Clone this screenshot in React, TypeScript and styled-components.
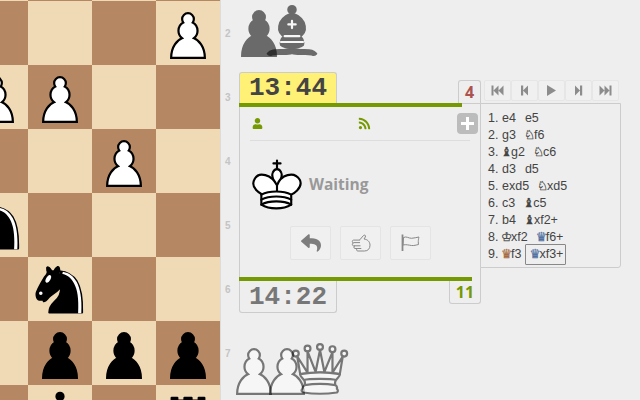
import React from "react";
import styled, { createGlobalStyle } from "styled-components";
import { FaUser, FaRss, FaReply } from "react-icons/fa";

const Global = createGlobalStyle`
  html, body { margin: 0; padding: 0; background: #eeeeee; }
  * { box-sizing: border-box; }
`;

const Page = styled.div`
  width: 640px; height: 400px; overflow: hidden; display: flex; background: #eeeeee;
  font-family: "Liberation Sans", Arial, sans-serif;
`;

const Board = styled.div`
  flex: none; display: grid; width: 220px; height: 400px;
  grid-template-columns: 28px repeat(3, 64px);
  grid-template-rows: 1px repeat(6, 64px) 15px;
`;

const Square = styled.div<{ $dark: boolean; $edge?: boolean }>`
  background: ${(p) => (p.$dark ? "#b58863" : "#f0d9b5")};
  overflow: hidden; display: flex; align-items: flex-start;
  justify-content: ${(p) => (p.$edge ? "flex-end" : "flex-start")};
`;

const PieceSvg = styled.svg<{ $size: number }>`
  flex: none; display: block; width: ${(p) => p.$size}px; height: ${(p) => p.$size}px;
`;

const BoardPawn = styled.div`
  flex: none; margin: -1px -1px 0 -1.5px;
`;

const Ranks = styled.div`
  flex: none; width: 19px; padding-top: 1px; display: flex; flex-direction: column;
  border-left: 1px solid #dcdcdc;
`;

const Rank = styled.div`
  height: 64px; flex: none; display: flex; align-items: center; padding-left: 4px;
  font-size: 10px; font-weight: bold; color: #c4c4c4;
`;

const Side = styled.div`
  flex: none; width: 382px; display: flex; flex-direction: column;
`;

const Captures = styled.div<{ $height: number; $top?: number }>`
  flex: none; display: flex; height: ${(p) => p.$height}px; align-items: flex-start;
  margin-top: ${(p) => p.$top ?? 0}px;
`;

const Capture = styled.div<{ $left: number; $dim?: boolean }>`
  flex: none; margin-left: ${(p) => p.$left}px;
  opacity: ${(p) => (p.$dim ? 0.5 : 0.55)};
`;

const Table = styled.div`flex: none; display: flex; align-items: flex-start;`;

const PlayColumn = styled.div`flex: none; width: 242px; display: flex; flex-direction: column;`;

const ClockRow = styled.div<{ $top?: boolean }>`
  flex: none; display: flex; justify-content: space-between;
  align-items: ${(p) => (p.$top ? "flex-end" : "flex-start")};
  ${(p) => (p.$top ? "height: 31px;" : "")}
`;

const Clock = styled.div<{ $running?: boolean }>`
  width: 98px; height: ${(p) => (p.$running ? 31 : 32)}px;
  display: flex; align-items: center; justify-content: center;
  font-family: "Liberation Mono", monospace; font-weight: bold; font-size: 26px;
  color: ${(p) => (p.$running ? "#444444" : "#777777")};
  background: ${(p) => (p.$running ? "#fff176" : "#eeeeee")};
  border: 1px solid #cccccc;
  border-width: ${(p) => (p.$running ? "1px 1px 0 1px" : "0 1px 1px 1px")};
  border-radius: ${(p) => (p.$running ? "3px 3px 0 0" : "0 0 3px 3px")};
`;

const Score = styled.div<{ $width: number; $height: number; $up?: boolean; $good?: boolean }>`
  width: ${(p) => p.$width}px; height: ${(p) => p.$height}px;
  display: flex; align-items: center; justify-content: center;
  font-size: 16px; font-weight: bold; font-family: "Open Sans", sans-serif;
  color: ${(p) => (p.$good ? "#759900" : "#ac524f")};
  border: 1px solid #cccccc;
  border-width: ${(p) => (p.$up ? "1px 1px 0 1px" : "0 1px 1px 1px")};
  border-radius: ${(p) => (p.$up ? "3px 3px 0 0" : "0 0 3px 3px")};
`;

const BarTrack = styled.div`
  flex: none; height: 4px; border-right: 1px solid #cccccc;
`;

const Bar = styled.div`
  height: 4px; background: #759900;
`;

const TopLine = styled.div`flex: none; height: 0; border-top: 1px solid #cccccc; margin-bottom: -1px;`;

const Panel = styled.div`
  flex: none; height: 170px; border: 1px solid #cccccc; border-width: 0 1px;
  display: flex; flex-direction: column; padding: 0 10px;
`;

const IconRow = styled.div`
  flex: none; height: 34px; display: flex; align-items: center; color: #759900; font-size: 13px;
  border-bottom: 1px solid #dddddd; position: relative;
`;

const PersonSlot = styled.div`width: 108px; padding-left: 2px; display: flex;`;
const RssSlot = styled.div`flex: 1; display: flex;`;

const PlusButton = styled.div`
  position: absolute; right: -8px; top: 6px; width: 21px; height: 21px; border-radius: 4px;
  background: #bcbcbc; display: flex; align-items: center; justify-content: center;
`;

const KingRow = styled.div`
  flex: none; display: flex; align-items: center; margin-top: 17px; margin-left: -5px; height: 52px;
`;

const Waiting = styled.div`
  font-family: "Open Sans", sans-serif; font-weight: bold; font-size: 15.5px; color: #999999;
  margin-bottom: 1px;
`;

const Actions = styled.div`
  flex: none; display: flex; justify-content: center; gap: 9px; margin-top: 16px; padding-left: 1px;
`;

const ActionButton = styled.div`
  width: 41px; height: 34px; display: flex; align-items: center; justify-content: center;
  background: #f0f0f0; border: 1px solid #e4e4e4; border-radius: 2px; color: #7d7d7d;
`;

const MovesColumn = styled.div`flex: none; width: 140px; display: flex; flex-direction: column; margin-left: -1px;`;

const Nav = styled.div`
  flex: none; height: 31px; padding: 8px 0 2px 4px; display: flex;
`;

const NavButton = styled.div`
  width: 27px; height: 21px; display: flex; align-items: center; justify-content: center;
  background: #f0f0f0; border: 1px solid #e6e6e6; border-radius: 2px;
`;

const MovesPanel = styled.div`
  flex: none; height: 165px; width: 141px; border: 1px solid #cccccc; border-radius: 0 0 3px 0;
  padding: 6px 0 0 7px; background: #eeeeee;
  font-size: 12.5px; color: #444444; line-height: 17px;
`;

const MoveRow = styled.div`flex: none; height: 17px; white-space: nowrap; display: flex; align-items: flex-start;`;
const MoveNum = styled.span`width: 14px; flex: none;`;
const Move = styled.span<{ $current?: boolean }>`
  margin-right: ${(p) => (p.$current ? 0 : 9)}px;
  ${(p) => (p.$current ? "margin-left: -5px; margin-top: -2px; border: 1px solid #888888; padding: 0 2px 0 4px; height: 21px; line-height: 19px; border-radius: 1px;" : "")}
`;
const Glyph = styled.span<{ $tint?: string }>`
  display: inline-block; width: 9px; line-height: 14px; font-family: "DejaVu Sans", sans-serif; font-size: 12.5px;
  margin-left: -1px; margin-right: 1px;
  color: ${(p) => p.$tint ?? "#444444"};
  -webkit-text-stroke: 0.25px ${(p) => p.$tint ?? "#444444"};
`;

const PawnPath = "M22.5 9c-2.21 0-4 1.79-4 4 0 .89.29 1.71.78 2.38C17.33 16.5 16 18.59 16 21c0 2.03.94 3.84 2.41 5.03-3 1.06-7.41 5.55-7.41 13.47h23c0-7.92-4.41-12.41-7.41-13.47 1.47-1.19 2.41-3 2.41-5.03 0-2.41-1.33-4.5-3.28-5.62.49-.67.78-1.49.78-2.38 0-2.21-1.79-4-4-4z";

const Pawn = ({ black, size = 66 }: { black?: boolean; size?: number }) => (
  <PieceSvg $size={size} viewBox="0 0 45 45">
    <path d={PawnPath} fill={black ? "#000" : "#fff"} stroke="#000" strokeWidth="1.5" strokeLinecap="round" />
  </PieceSvg>
);

const SquarePawn = ({ black }: { black?: boolean }) => (
  <BoardPawn><Pawn black={black} /></BoardPawn>
);

const Knight = () => (
  <PieceSvg $size={64} viewBox="0 0 45 45">
    <g fill="#000" stroke="#000" strokeWidth="1.5" strokeLinecap="round" strokeLinejoin="round">
      <path d="M22 10c10.5 1 16.5 8 16 29H15c0-9 10-6.5 8-21" />
      <path d="M24 18c.38 2.91-5.55 7.37-8 9-3 2-2.82 4.34-5 4-1.042-.94 1.41-3.04 0-3-1 0 .19 1.23-1 2-1 0-4.003 1-4-4 0-2 6-12 6-12s1.89-1.9 2-3.5c-.73-.994-.5-2-.5-3 1-1 3 2.5 3 2.5h2s.78-1.992 2.5-3c1 0 1 3 1 3" />
      <path fill="#fff" stroke="#fff" d="M9.5 25.5a.5.5 0 1 1-1 0 .5.5 0 1 1 1 0zm5.433-9.75a.5 1.5 30 1 1-1.299-.75.5 1.5 30 1 1 1.299.75z" />
      <path fill="#fff" stroke="none" d="M24.55 10.4l-.45 1.45.5.15c3.15 1 5.65 2.49 7.9 6.75S35.75 29.06 35.25 39l-.05.5h2.25l.05-.5c.5-10.06-.88-16.85-3.25-21.34-2.37-4.49-5.79-6.64-9.19-7.16l-.51-.1z" />
    </g>
  </PieceSvg>
);

const BlackBishop = ({ size = 64 }: { size?: number }) => (
  <PieceSvg $size={size} viewBox="0 0 45 45">
    <g fill="#000" stroke="#000" strokeWidth="1.5" strokeLinecap="round" strokeLinejoin="round">
      <path strokeLinecap="butt" d="M9 36c3.39-.97 10.11.43 13.5-2 3.39 2.43 10.11 1.03 13.5 2 0 0 1.65.54 3 2-.68.97-1.65.99-3 .5-3.39-.97-10.11.46-13.5-1-3.39 1.46-10.11.03-13.5 1-1.354.49-2.323.47-3-.5 1.354-1.94 3-2 3-2z" />
      <path strokeLinecap="butt" d="M15 32c2.5 2.5 12.5 2.5 15 0 .5-1.5 0-2 0-2 0-2.5-2.5-4-2.5-4 5.5-1.5 6-11.5-5-15.5-11 4-10.5 14-5 15.5 0 0-2.5 1.5-2.5 4 0 0-.5.5 0 2z" />
      <path d="M25 8a2.5 2.5 0 1 1-5 0 2.5 2.5 0 1 1 5 0z" />
      <path d="M17.5 26h10M15 30h15m-7.5-14.5v5M20 18h5" stroke="#fff" strokeLinejoin="miter" fill="none" />
    </g>
  </PieceSvg>
);

const BlackRook = () => (
  <PieceSvg $size={64} viewBox="0 0 45 45">
    <g fill="#000" stroke="#000" strokeWidth="1.5" strokeLinejoin="round">
      <path d="M14 16.5L11 14h23l-3 2.5H14zM11 14V9h4v2h5V9h5v2h5V9h4v5H11z" />
      <path d="M14 29.5v-13h17v13H14z" />
    </g>
  </PieceSvg>
);

const WhiteQueen = ({ size = 64 }: { size?: number }) => (
  <PieceSvg $size={size} viewBox="0 0 45 45">
    <g fill="#fff" fillRule="evenodd" stroke="#000" strokeWidth="1.5" strokeLinejoin="round">
      <path d="M8 12a2 2 0 1 1-4 0 2 2 0 1 1 4 0zM24.5 7.5a2 2 0 1 1-4 0 2 2 0 1 1 4 0zM41 12a2 2 0 1 1-4 0 2 2 0 1 1 4 0zM16 8.5a2 2 0 1 1-4 0 2 2 0 1 1 4 0zM33 9a2 2 0 1 1-4 0 2 2 0 1 1 4 0z" />
      <path d="M9 26c8.5-1.5 21-1.5 27 0l2-12-7 11V11l-5.5 13.5-3-15-3 15-5.5-14V25L7 14l2 12z" strokeLinecap="butt" />
      <path d="M9 26c0 2 1.5 2 2.5 4 1 1.5 1 1 .5 3.5-1.5 1-1.5 2.5-1.5 2.5-1.5 1.5.5 2.5.5 2.5 6.5 1 16.5 1 23 0 0 0 1.5-1 0-2.5 0 0 .5-1.5-1-2.5-.5-2.5-.5-2 .5-3.5 1-2 2.5-2 2.5-4-8.5-1.5-18.5-1.5-27 0z" strokeLinecap="butt" />
      <path d="M11.5 30c3.5-1 18.5-1 22 0M12 33.5c6-1 15-1 21 0" fill="none" />
    </g>
  </PieceSvg>
);

const WhiteKing = () => (
  <PieceSvg $size={64} viewBox="0 0 45 45">
    <g fill="none" fillRule="evenodd" stroke="#000" strokeWidth="1.5" strokeLinecap="round" strokeLinejoin="round">
      <path d="M22.5 11.63V6M20 8h5" strokeLinejoin="miter" />
      <path d="M22.5 25s4.5-7.5 3-10.5c0 0-1-2.5-3-2.5s-3 2.5-3 2.5c-1.5 3 3 10.5 3 10.5" fill="#fff" strokeLinecap="butt" strokeLinejoin="miter" />
      <path d="M11.5 37c5.5 3.5 15.5 3.5 21 0v-7s9-4.5 6-10.5c-4-6.5-13.5-3.5-16 4V27v-3.5c-3.5-7.5-13-10.5-16-4-3 6 5 10 5 10V37z" fill="#fff" />
      <path d="M11.5 30c5.5-3 15.5-3 21 0m-21 3.5c5.5-3 15.5-3 21 0m-21 3.5c5.5-3 15.5-3 21 0" />
    </g>
  </PieceSvg>
);

const NavIcon = ({ d }: { d: string }) => (
  <svg width="15" height="13" viewBox="0 0 15 13"><path d={d} fill="#8c8c8c" /></svg>
);

const navPaths = [
  "M1.5 1.5h2v10h-2zM8.5 1.5v10L3.5 6.5zM13.5 1.5v10l-5-5z",
  "M4 1.5h2.2v10H4zM11 1.5v10l-5-5z",
  "M3 1l9 5.5L3 12z",
  "M9 1.5h2.2v10H9zM4 1.5v10l5-5z",
  "M1.5 1.5v10l5-5zM6.5 1.5v10l5-5zM11.5 1.5h2v10h-2z",
];

const HandIcon = () => (
  <svg width="20" height="18" viewBox="0 0 20 18" fill="none" stroke="#888888" strokeWidth="1" strokeLinejoin="round">
    <path d="M9 5.5L12.5 1.5c1-1 2.7 0 1.8 1.5L13 5c3.2.3 6 2.5 6 6.2 0 3.6-2.2 5.8-5.5 5.8H6.7c-1.5 0-1.5-2.5 0-2.5H4c-1.5 0-1.5-2.7 0-2.7H2.5c-1.5 0-1.6-2.8 0-2.8 -1.6 0-1.6-2.9 0-2.9H9z" />
    <path d="M2.5 8.6H9M4 11.8h5.5M6.7 14.5h3.6" />
  </svg>
);

const FlagIcon = () => (
  <svg width="20" height="18" viewBox="0 0 20 18" fill="none" stroke="#888888" strokeWidth="1">
    <path d="M1.5 0.5v16.5" strokeWidth="1.8" />
    <path d="M2.5 3.5c3-1.5 5 .8 8 .8 2.5 0 5-1 7.5-1.3 0 0-1.2 3.4-.5 7.5-2.3.5-4.5 1.3-7 1-2.5-.3-5.5-1.3-8.5-.5z" />
  </svg>
);

type Cell = React.ReactNode;
const b: Cell[][] = [
  [null, null, null, null],
  [null, null, null, <SquarePawn key="p" />],
  [<SquarePawn key="p" />, <SquarePawn key="p" />, null, null],
  [null, null, <SquarePawn key="p" />, null],
  [<Knight key="k" />, null, null, null],
  [null, <Knight key="k" />, null, null],
  [null, <SquarePawn key="b" black />, <SquarePawn key="b" black />, <SquarePawn key="b" black />],
  [null, <BlackBishop key="b" />, null, <BlackRook key="r" />],
];

const BLUE = "#4f6f9f";
const ORANGE = "#a5693f";

const moves: [string, React.ReactNode, React.ReactNode][] = [
  ["1.", "e4", "e5"],
  ["2.", "g3", <><Glyph>♘</Glyph>f6</>],
  ["3.", <><Glyph>♝</Glyph>g2</>, <><Glyph>♘</Glyph>c6</>],
  ["4.", "d3", "d5"],
  ["5.", "exd5", <><Glyph>♘</Glyph>xd5</>],
  ["6.", "c3", <><Glyph>♝</Glyph>c5</>],
  ["7.", "b4", <><Glyph>♝</Glyph>xf2+</>],
  ["8.", <><Glyph>♔</Glyph>xf2</>, <><Glyph $tint={BLUE}>♛</Glyph>f6+</>],
  ["9.", <><Glyph $tint={ORANGE}>♛</Glyph>f3</>, <><Glyph $tint={BLUE}>♛</Glyph>xf3+</>],
];

export default function App() {
  return (
    <>
      <Global />
      <Page>
        <Board>
          {b.flatMap((row, r) =>
            row.map((cell, c) => (
              <Square key={`${r}-${c}`} $dark={(r + c) % 2 === 1} $edge={c === 0}>
                {cell}
              </Square>
            ))
          )}
        </Board>
        <Ranks>
          {[2, 3, 4, 5, 6, 7].map((n) => <Rank key={n}>{n}</Rank>)}
        </Ranks>
        <Side>
          <Captures $height={74} $top={-2}>
            <Capture $left={-13}><Pawn black /></Capture>
            <Capture $left={-33}><BlackBishop size={66} /></Capture>
          </Captures>
          <Table>
            <PlayColumn>
              <ClockRow $top>
                <Clock $running>13:44</Clock>
                <Score $width={23} $height={23} $up>4</Score>
              </ClockRow>
              <TopLine />
              <BarTrack><Bar style={{ width: "92.5%" }} /></BarTrack>
              <Panel>
                <IconRow>
                  <PersonSlot><FaUser size={11} /></PersonSlot>
                  <RssSlot><FaRss size={13} /></RssSlot>
                  <PlusButton>
                    <svg width="13" height="13" viewBox="0 0 13 13"><path d="M5 0h3v5h5v3H8v5H5V8H0V5h5z" fill="#fff" /></svg>
                  </PlusButton>
                </IconRow>
                <KingRow>
                  <WhiteKing />
                  <Waiting>Waiting</Waiting>
                </KingRow>
                <Actions>
                  <ActionButton><FaReply size={20} /></ActionButton>
                  <ActionButton><HandIcon /></ActionButton>
                  <ActionButton><FlagIcon /></ActionButton>
                </Actions>
              </Panel>
              <BarTrack><Bar style={{ width: "96.7%" }} /></BarTrack>
              <ClockRow>
                <Clock>14:22</Clock>
                <Score $width={32} $height={23} $good>11</Score>
              </ClockRow>
              <Captures $height={66} $top={23}>
                <Capture $left={-18} $dim><Pawn /></Capture>
                <Capture $left={-33} $dim><Pawn /></Capture>
                <Capture $left={-33} $dim><WhiteQueen size={66} /></Capture>
              </Captures>
            </PlayColumn>
            <MovesColumn>
              <Nav>
                {navPaths.map((d) => <NavButton key={d}><NavIcon d={d} /></NavButton>)}
              </Nav>
              <MovesPanel>
                {moves.map(([n, w, bl], i) => (
                  <MoveRow key={n}>
                    <MoveNum>{n}</MoveNum>
                    <Move>{w}</Move>
                    <Move $current={i === 8}>{bl}</Move>
                  </MoveRow>
                ))}
              </MovesPanel>
            </MovesColumn>
          </Table>
        </Side>
      </Page>
    </>
  );
}
